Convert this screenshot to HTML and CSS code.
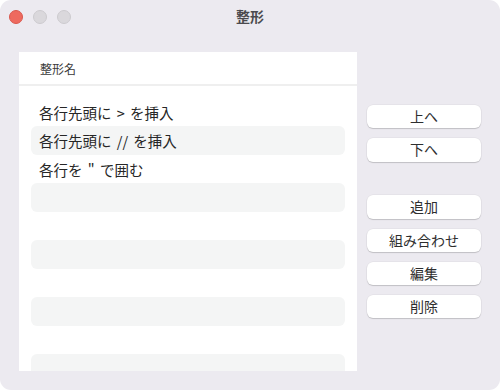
FILE: index.html
```html
<!DOCTYPE html>
<html lang="ja">
<head>
<meta charset="utf-8">
<link rel="stylesheet" href="styles.css">
</head>
<body>
<div class="window">
  <div class="titlebar">
    <div class="lights">
      <span class="light red"></span>
      <span class="light grey"></span>
      <span class="light grey"></span>
    </div>
    <div class="title">整形</div>
  </div>
  <div class="content">
    <div class="list">
      <div class="list-header">整形名</div>
      <div class="rows">
        <div class="row">各行先頭に &gt; を挿入</div>
        <div class="row alt">各行先頭に // を挿入</div>
        <div class="row">各行を " で囲む</div>
        <div class="row alt"></div>
        <div class="row"></div>
        <div class="row alt"></div>
        <div class="row"></div>
        <div class="row alt"></div>
        <div class="row"></div>
        <div class="row alt"></div>
      </div>
    </div>
    <div class="buttons">
      <button class="btn">上へ</button>
      <button class="btn">下へ</button>
      <div class="spacer"></div>
      <button class="btn">追加</button>
      <button class="btn">組み合わせ</button>
      <button class="btn">編集</button>
      <button class="btn">削除</button>
    </div>
  </div>
</div>
</body>
</html>
```

FILE: styles.css
```css
* { box-sizing: border-box; }
html, body {
  margin: 0;
  padding: 0;
  background: #ffffff;
}
body {
  width: 500px;
  height: 390px;
  overflow: hidden;
  font-family: "Noto Sans CJK JP", "Noto Sans", sans-serif;
}
.window {
  width: 500px;
  height: 390px;
  background: #ECEAF0;
  border-radius: 11px;
  padding: 0 19px 19px 19px;
  display: flex;
  flex-direction: column;
  overflow: hidden;
}
.titlebar {
  height: 34px;
  flex: none;
  display: flex;
  align-items: center;
  position: relative;
  margin-left: -10px;
}
.lights {
  display: flex;
  gap: 10px;
  position: relative;
  z-index: 1;
}
.light {
  width: 14px;
  height: 14px;
  border-radius: 50%;
  display: block;
}
.light.red {
  background: #EE6A5F;
  border: 0.5px solid #D9584E;
}
.light.grey {
  background: #DAD8DC;
  border: 0.5px solid #CCCACE;
}
.title {
  position: absolute;
  left: 0;
  right: -10px;
  top: 0;
  height: 34px;
  line-height: 32px;
  text-align: center;
  font-size: 14px;
  font-weight: 700;
  color: #4B4A4E;
}
.content {
  margin-top: 18px;
  flex: 1;
  display: flex;
  gap: 10px;
  min-height: 0;
}
.list {
  width: 338px;
  background: #ffffff;
  overflow: hidden;
  display: flex;
  flex-direction: column;
}
.list-header {
  height: 34px;
  flex: none;
  border-bottom: 2px solid #EFEFEF;
  padding-left: 21px;
  font-size: 12px;
  line-height: 33px;
  color: #3A3A3A;
}
.rows {
  padding: 11.5px 12px 0 12px;
}
.row {
  height: 28.5px;
  border-radius: 6px;
  padding-left: 8px;
  font-size: 14.5px;
  line-height: 29px;
  color: #262626;
  white-space: pre;
  word-spacing: 2px;
}
.row.alt {
  background: #F4F5F5;
}
.buttons {
  width: 114px;
  padding-top: 53px;
  display: flex;
  flex-direction: column;
  gap: 10px;
}
.spacer {
  height: 13.7px;
  flex: none;
}
.btn {
  height: 23.3px;
  flex: none;
  border: none;
  border-radius: 6px;
  background: #ffffff;
  box-shadow: 0 1px 1px rgba(0,0,0,0.16), 0 0 0 0.5px rgba(0,0,0,0.06);
  font-family: "Noto Sans CJK JP", "Noto Sans", sans-serif;
  font-size: 14px;
  line-height: 23px;
  padding: 0;
  color: #2E2E2E;
}
```
